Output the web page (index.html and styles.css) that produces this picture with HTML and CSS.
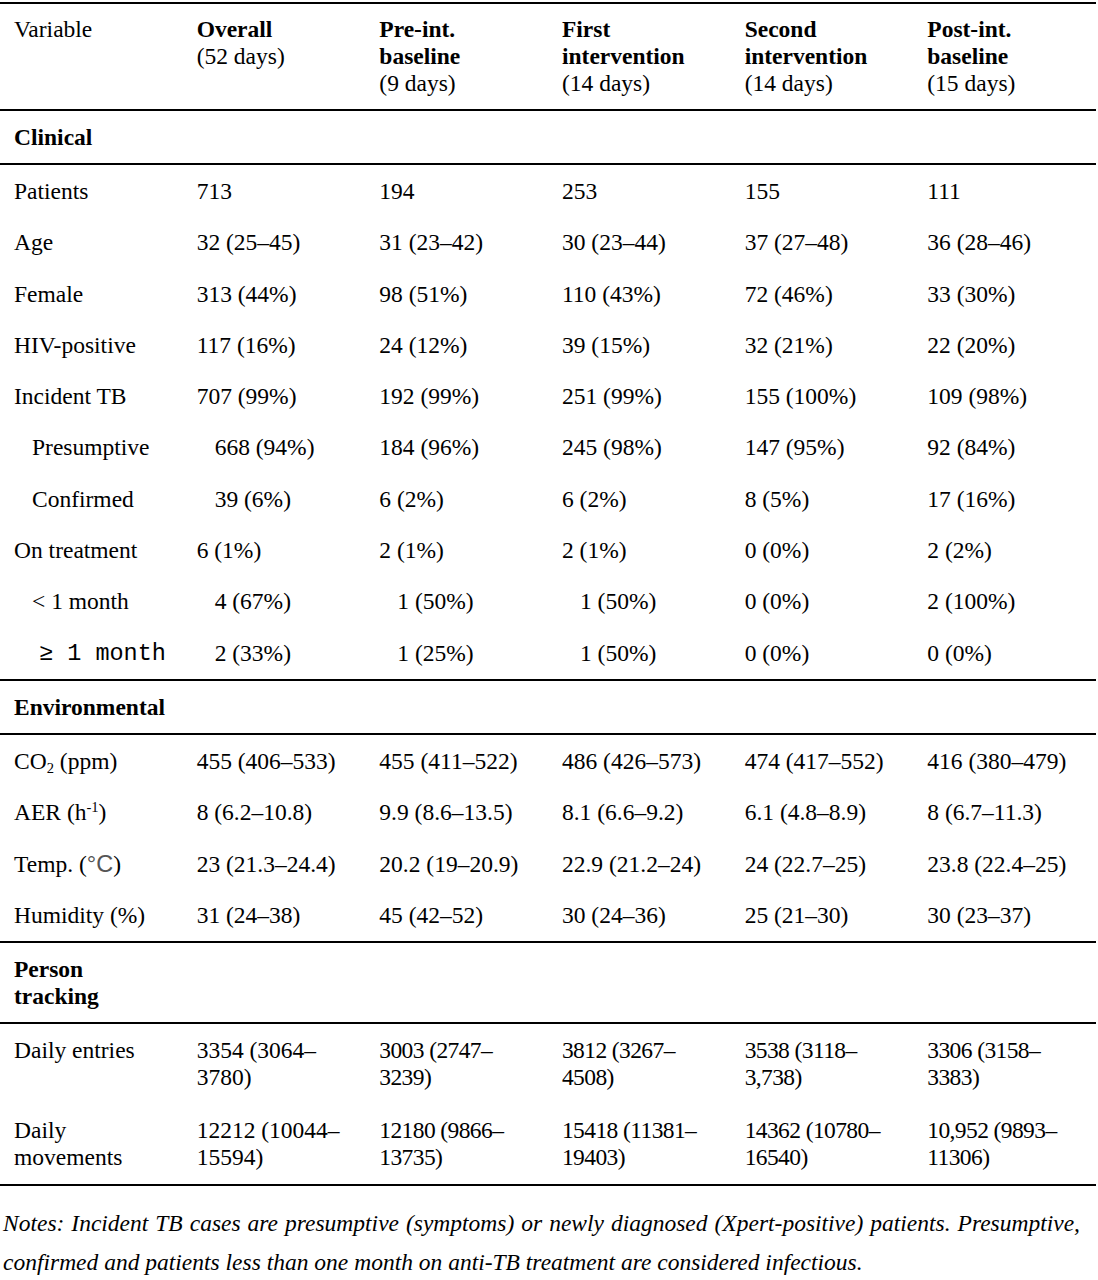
FILE: index.html
```html
<!DOCTYPE html>
<html>
<head>
    <meta charset="utf-8">
    <title>Table 1</title>
    <link rel="stylesheet" href="styles.css">
</head>
<body>
<div class="page">
    <table class="stats">
        <thead>
            <tr>
                <th class="plain">Variable</th>
                <th><b>Overall</b><br>(52 days)</th>
                <th><b>Pre-int.<br>baseline</b><br>(9 days)</th>
                <th><b>First<br>intervention</b><br>(14 days)</th>
                <th><b>Second<br>intervention</b><br>(14 days)</th>
                <th><b>Post-int.<br>baseline</b><br>(15 days)</th>
            </tr>
        </thead>
        <tbody>
            <tr class="section"><td>Clinical</td><td colspan="5"></td></tr>
            <tr class="first"><td>Patients</td><td>713</td><td>194</td><td>253</td><td>155</td><td>111</td></tr>
            <tr><td>Age</td><td>32 (25–45)</td><td>31 (23–42)</td><td>30 (23–44)</td><td>37 (27–48)</td><td>36 (28–46)</td></tr>
            <tr><td>Female</td><td>313 (44%)</td><td>98 (51%)</td><td>110 (43%)</td><td>72 (46%)</td><td>33 (30%)</td></tr>
            <tr><td>HIV-positive</td><td>117 (16%)</td><td>24 (12%)</td><td>39 (15%)</td><td>32 (21%)</td><td>22 (20%)</td></tr>
            <tr><td>Incident TB</td><td>707 (99%)</td><td>192 (99%)</td><td>251 (99%)</td><td>155 (100%)</td><td>109 (98%)</td></tr>
            <tr><td class="ind">Presumptive</td><td class="ind">668 (94%)</td><td>184 (96%)</td><td>245 (98%)</td><td>147 (95%)</td><td>92 (84%)</td></tr>
            <tr><td class="ind">Confirmed</td><td class="ind">39 (6%)</td><td>6 (2%)</td><td>6 (2%)</td><td>8 (5%)</td><td>17 (16%)</td></tr>
            <tr><td>On treatment</td><td>6 (1%)</td><td>2 (1%)</td><td>2 (1%)</td><td>0 (0%)</td><td>2 (2%)</td></tr>
            <tr><td class="ind">&lt; 1 month</td><td class="ind">4 (67%)</td><td class="ind">1 (50%)</td><td class="ind">1 (50%)</td><td>0 (0%)</td><td>2 (100%)</td></tr>
            <tr class="last"><td class="ind mono">≥ 1 month</td><td class="ind">2 (33%)</td><td class="ind">1 (25%)</td><td class="ind">1 (50%)</td><td>0 (0%)</td><td>0 (0%)</td></tr>

            <tr class="section"><td>Environmental</td><td colspan="5"></td></tr>
            <tr class="first"><td>CO<sub>2</sub> (ppm)</td><td>455 (406–533)</td><td>455 (411–522)</td><td>486 (426–573)</td><td>474 (417–552)</td><td>416 (380–479)</td></tr>
            <tr><td>AER (h<sup>-1</sup>)</td><td>8 (6.2–10.8)</td><td>9.9 (8.6–13.5)</td><td>8.1 (6.6–9.2)</td><td>6.1 (4.8–8.9)</td><td>8 (6.7–11.3)</td></tr>
            <tr><td>Temp. (<span class="unit">°C</span>)</td><td>23 (21.3–24.4)</td><td>20.2 (19–20.9)</td><td>22.9 (21.2–24)</td><td>24 (22.7–25)</td><td>23.8 (22.4–25)</td></tr>
            <tr class="last"><td>Humidity (%)</td><td>31 (24–38)</td><td>45 (42–52)</td><td>30 (24–36)</td><td>25 (21–30)</td><td>30 (23–37)</td></tr>

            <tr class="section"><td>Person tracking</td><td colspan="5"></td></tr>
            <tr class="first tall"><td>Daily entries</td><td>3354 (3064–3780)</td><td class="tight">3003 (2747–3239)</td><td class="tight">3812 (3267–4508)</td><td class="tight">3538 (3118–3,738)</td><td class="tight">3306 (3158–3383)</td></tr>
            <tr class="last"><td>Daily movements</td><td>12212 (10044–15594)</td><td class="tight">12180 (9866–13735)</td><td class="tight">15418 (11381–19403)</td><td class="tight">14362 (10780–16540)</td><td class="tight">10,952 (9893–11306)</td></tr>
        </tbody>
    </table>

    <p class="notes">Notes: Incident TB cases are presumptive (symptoms) or newly diagnosed (Xpert-positive) patients. Presumptive, confirmed and patients less than one month on anti-TB treatment are considered infectious.</p>
</div>
</body>
</html>
```

FILE: styles.css
```css
* {
    box-sizing: border-box;
    margin: 0;
    padding: 0;
}

body {
    background: #fff;
    color: #000;
    font-family: "Liberation Serif", "Times New Roman", serif;
    font-size: 23.5px;
    line-height: 27px;
}

.page {
    width: 1098px;
    padding-top: 2px;
}

.stats {
    width: 1096px;
    border-collapse: collapse;
    table-layout: fixed;
    border-top: 2px solid #000;
    border-bottom: 2px solid #000;
}

.stats th,
.stats td {
    text-align: left;
    vertical-align: top;
    padding: 12px 14px 12px 14px;
}

.stats th {
    font-weight: normal;
}

.stats thead tr {
    border-bottom: 2px solid #000;
}

.stats td {
    line-height: 27.3px;
}

.section td {
    font-weight: bold;
    padding-top: 13px;
    padding-bottom: 12px;
    line-height: 27px;
}

.section {
    border-bottom: 2px solid #000;
}

.last {
    border-bottom: 2px solid #000;
}

.first td {
    padding-top: 13px;
}

.tall td {
    padding-bottom: 14px;
    line-height: 27px;
}

.stats td.ind {
    padding-left: 32px;
}

.mono {
    font-family: "Liberation Mono", "Courier New", monospace;
}

.stats td.mono {
    padding-left: 39px;
}

.unit {
    font-family: "Liberation Sans", Arial, sans-serif;
    color: #555;
}

.tight {
    letter-spacing: -0.6px;
}

sub, sup {
    font-size: 0.62em;
    line-height: 0;
}

sub {
    vertical-align: -0.25em;
}

sup {
    vertical-align: 0.55em;
}

.notes {
    margin-top: 18px;
    padding: 0 18px 0 3px;
    font-style: italic;
    line-height: 39px;
    text-align: justify;
}
```
